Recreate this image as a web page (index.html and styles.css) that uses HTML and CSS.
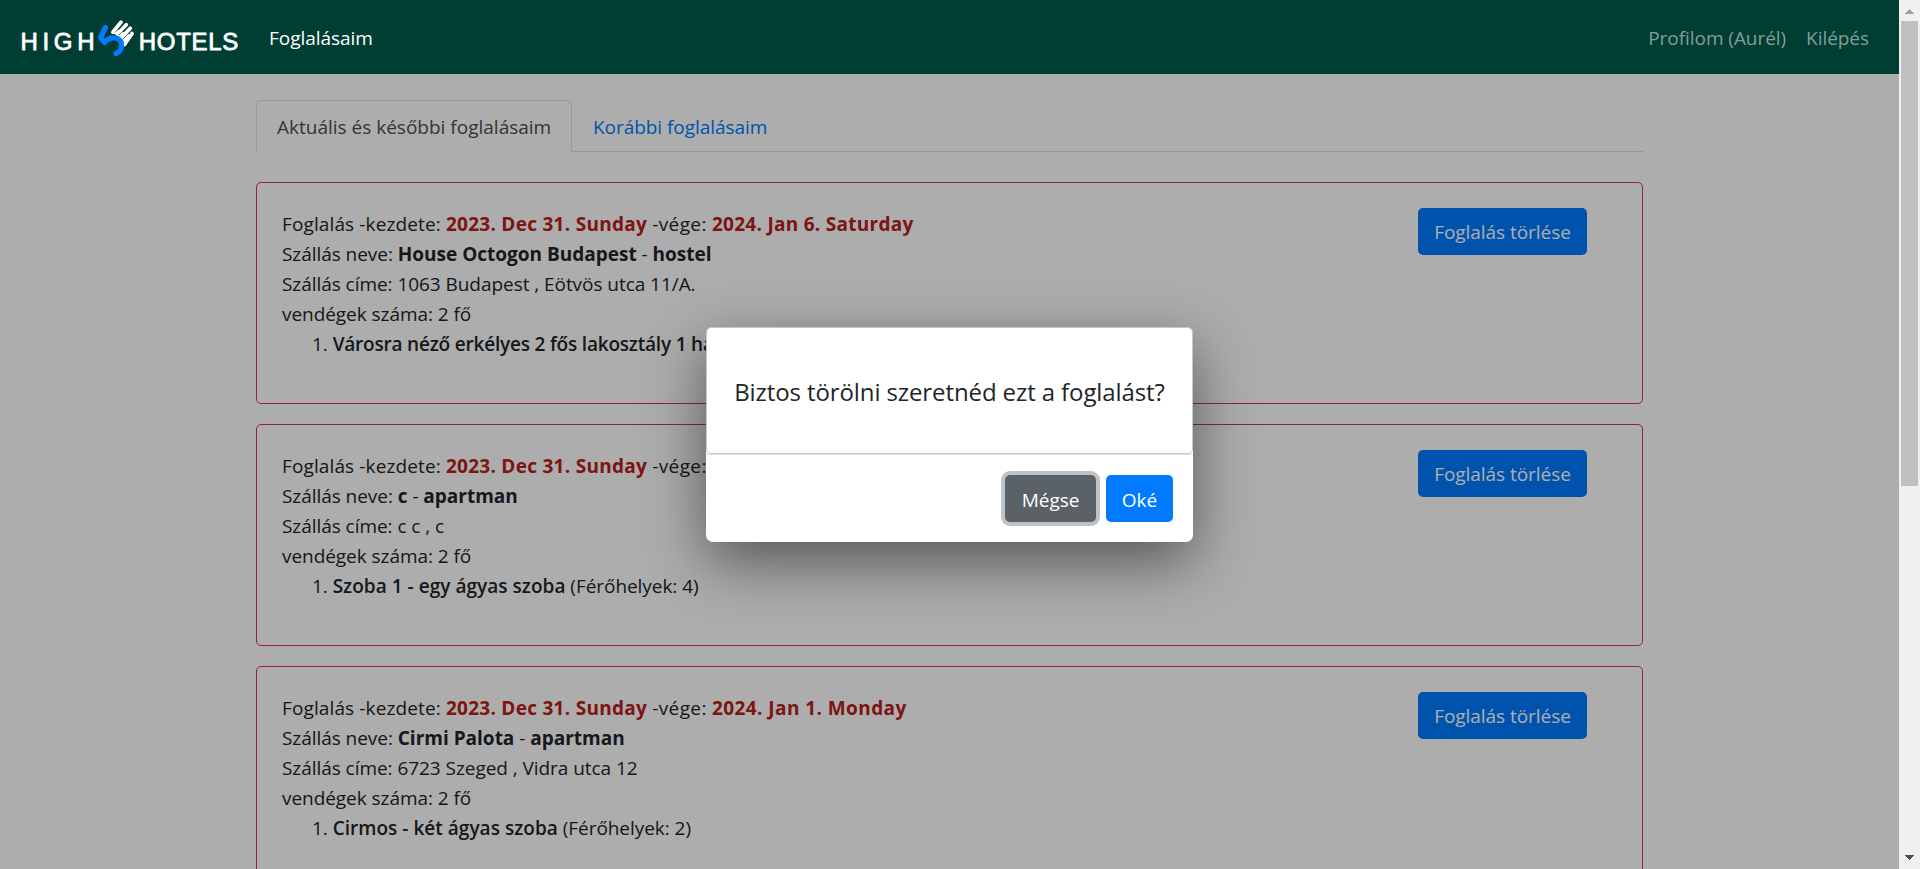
FILE: index.html
```html
<!DOCTYPE html>
<html lang="hu">
<head>
<meta charset="utf-8">
<title>High5Hotels</title>
<link rel="stylesheet" href="styles.css">
</head>
<body>
<div class="page">
  <nav class="navbar">
    <svg class="logo" width="220" height="44" viewBox="0 0 220 44">
      <g class="logo-text">
        <text x="0.500" y="34.700" textLength="74" lengthAdjust="spacing">HIGH</text>
        <text x="118.800" y="34.700" textLength="99.500" lengthAdjust="spacing">HOTELS</text>
      </g>
      <path class="palm" d="M91 18 L96 14 L109 19 L107 29 L104.500 32 Q104 21 91 18Z"/>
      <g class="fingers">
        <path d="M93 17 L101 7.200"/>
        <path d="M97.500 19 L106.300 9.800"/>
        <path d="M101.500 22.500 L110.300 13.300"/>
        <path d="M104.800 29 L112 18.600"/>
      </g>
      <g class="gaps">
        <path d="M95 17.500 L104 7.500"/>
        <path d="M99 20 L109 10.500"/>
        <path d="M102.500 24.500 L112 15"/>
      </g>
      <path class="five" d="M85.500 12.500 L80.500 22.500 L84.500 27.500 C90 20.500 100.500 21.500 101.500 29.500 C102 34 99.500 37.500 96 38.500"/>
    </svg>
    <a class="nav-link active">Foglalásaim</a>
    <div class="nav-end">
      <a class="nav-link">Profilom (Aurél)</a>
      <a class="nav-link">Kilépés</a>
    </div>
  </nav>
  <main class="container">
    <div class="tabs">
      <a class="tab current">Aktuális és későbbi foglalásaim</a>
      <a class="tab">Korábbi foglalásaim</a>
    </div>
    <section class="card">
      <div class="details">
        <div class="period">Foglalás -kezdete: <b class="date">2023. Dec 31. Sunday</b> <span class="until">-vége:</span> <b class="date">2024. Jan 6. Saturday</b></div>
        <div>Szállás neve: <b>House Octogon Budapest</b> - <b>hostel</b></div>
        <div>Szállás címe: 1063 Budapest , Eötvös utca 11/A.</div>
        <div>vendégek száma: 2 fő</div>
        <div class="room">1. <b class="long">Városra néző erkélyes 2 fős lakosztály 1 há</b></div>
      </div>
      <button class="btn">Foglalás törlése</button>
    </section>
    <section class="card">
      <div class="details">
        <div class="period">Foglalás -kezdete: <b class="date">2023. Dec 31. Sunday</b> <span class="until">-vége:</span></div>
        <div>Szállás neve: <b>c</b> - <b>apartman</b></div>
        <div>Szállás címe: c c , c</div>
        <div>vendégek száma: 2 fő</div>
        <div class="room">1. <b>Szoba 1 - egy ágyas szoba</b> (Férőhelyek: 4)</div>
      </div>
      <button class="btn">Foglalás törlése</button>
    </section>
    <section class="card">
      <div class="details">
        <div class="period">Foglalás -kezdete: <b class="date">2023. Dec 31. Sunday</b> <span class="until">-vége:</span> <b class="date wide">2024. Jan 1. Monday</b></div>
        <div>Szállás neve: <b>Cirmi Palota</b> - <b>apartman</b></div>
        <div>Szállás címe: 6723 Szeged , Vidra utca 12</div>
        <div>vendégek száma: 2 fő</div>
        <div class="room">1. <b>Cirmos - két ágyas szoba</b> (Férőhelyek: 2)</div>
      </div>
      <button class="btn">Foglalás törlése</button>
    </section>
  </main>
  <div class="backdrop">
    <div class="modal">
      <div class="modal-body">Biztos törölni szeretnéd ezt a foglalást?</div>
      <div class="modal-footer">
        <button class="btn cancel">Mégse</button>
        <button class="btn ok">Oké</button>
      </div>
    </div>
  </div>
</div>
<div class="scrollbar">
  <svg width="21" height="21" viewBox="0 0 21 21" shape-rendering="crispEdges"><path fill="#a0a0a0" d="M6 14h9l-4.500-5z"/></svg>
  <div class="thumb"></div>
  <svg class="down" width="21" height="21" viewBox="0 0 21 21" shape-rendering="crispEdges"><path fill="#505050" d="M6 7h9l-4.500 5z"/></svg>
</div>
</body>
</html>
```
FILE: styles.css
```css
* { box-sizing: border-box; }
body {
  margin: 0;
  height: 869px;
  overflow: hidden;
  display: flex;
  font: 19px/30px "Open Sans", "Noto Sans", sans-serif;
  letter-spacing: -0.05px;
  color: #212529;
  background: #fff;
}
.page { position: relative; width: 1899px; height: 869px; overflow: hidden; }
.navbar {
  position: relative;
  z-index: 2;
  height: 74px;
  padding: 0 20px;
  display: flex;
  align-items: center;
  background: #003e33;
}
.logo { flex: none; margin-right: 29px; }
.logo-text {
  font: 24px "Liberation Sans", Arial, sans-serif;
  letter-spacing: 0;
  fill: #fff;
  stroke: #fff;
  stroke-width: 0.8;
  stroke-linejoin: round;
}
.palm { fill: #fff; }
.fingers { stroke: #fff; stroke-width: 3.8; stroke-linecap: round; }
.gaps { stroke: #003e33; stroke-width: 0.7; }
.five { fill: none; stroke: #007bff; stroke-width: 5.2; stroke-linecap: round; stroke-linejoin: round; }
.nav-link { padding-top: 2px; color: #809f99; }
.nav-link.active { color: #fff; }
.nav-end { display: flex; gap: 20px; margin-left: auto; margin-right: 10px; }
.container { width: 1387px; margin: 26px 0 0 256px; }
.tabs { display: flex; height: 52px; border-bottom: 1px solid #dee2e6; margin-bottom: 30px; }
.tab { height: 52px; padding: 12px 21px; color: #007bff; white-space: nowrap; }
.tab.current {
  width: 316px;
  padding: 11px 20px;
  letter-spacing: 0;
  color: #495057;
  background: #fff;
  border: 1px solid #dee2e6;
  border-bottom-color: #fff;
  border-radius: 5px 5px 0 0;
}
.card {
  height: 222px;
  margin-bottom: 20px;
  padding: 25px 55px 25px 25px;
  display: flex;
  justify-content: space-between;
  align-items: flex-start;
  border: 1px solid #dc3545;
  border-radius: 5px;
}
.details { padding-top: 1px; white-space: nowrap; }
b { font-weight: 700; letter-spacing: 0; }
.period { letter-spacing: 0.12px; }
.until { letter-spacing: 0.4px; }
.date { color: #b8201a; letter-spacing: 0.28px; }
.date.wide { letter-spacing: 0.43px; }
.room { padding-left: 30px; }
.room b { font-weight: 600; letter-spacing: 0.03px; }
.room .long { letter-spacing: -0.2px; }
.btn {
  width: 169px;
  height: 47px;
  padding: 0;
  border: 0;
  border-radius: 5px;
  font: inherit;
  letter-spacing: inherit;
  color: #fff;
  background: #007bff;
}
.backdrop {
  position: absolute;
  inset: 0;
  z-index: 1;
  display: flex;
  justify-content: center;
  align-items: center;
  background: rgba(0, 0, 0, 0.32);
}
.modal {
  width: 487px;
  height: 215px;
  border-radius: 7px;
  background: #fff;
  box-shadow: 0 20px 60px rgba(0, 0, 0, 0.5);
}
.modal-body {
  height: 127px;
  display: flex;
  justify-content: center;
  align-items: center;
  padding-top: 2px;
  font-size: 24px;
  letter-spacing: -0.1px;
  border: 1px solid #c8c8c8;
  border-radius: 5px;
  white-space: nowrap;
}
.modal-footer {
  display: flex;
  justify-content: flex-end;
  gap: 10px;
  padding: 20px;
  border-top: 1px solid #dee2e6;
}
.modal-footer .btn { padding-top: 2px; font-weight: 500; }
.modal-footer .cancel { width: 91px; background: #5a6268; box-shadow: 0 0 0 4px #bfc2c7; }
.modal-footer .ok { width: 67px; }
.scrollbar { width: 21px; display: flex; flex-direction: column; background: #f0f0f0; }
.thumb { width: 17px; height: 465px; margin-left: 2px; background: #c0c0c0; }
.down { margin-top: auto; }
```
